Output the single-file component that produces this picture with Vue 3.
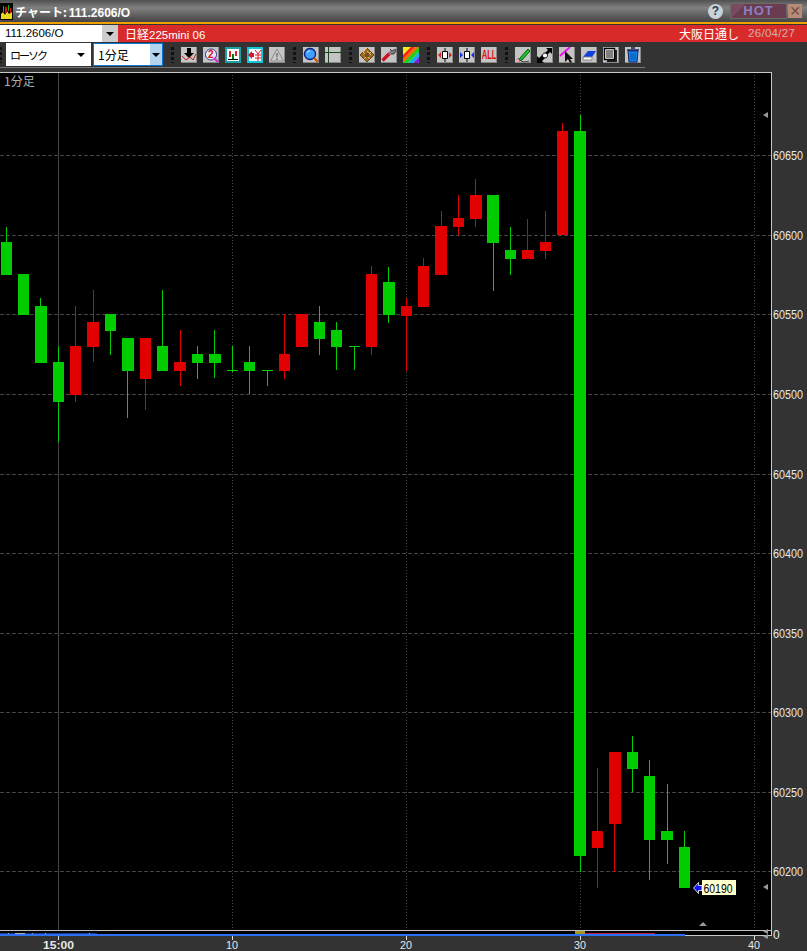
<script setup>
const G = '#00cc00'
const R = '#e00000'

// left, right, body top, body bottom, wick x, wick top, wick bottom, colour
const candles = [
  [1, 12, 242, 275, 6, 227, 242, G],
  [18, 29, 274, 315, 23, 274, 315, G],
  [35, 47, 306, 363, 40, 298, 363, G],
  [53, 64, 362, 402, 58, 346, 442, G],
  [70, 81, 346, 395, 75, 306, 402, R],
  [87, 99, 322, 347, 93, 290, 362, R],
  [105, 116, 314, 331, 110, 314, 355, G],
  [122, 134, 338, 371, 127, 338, 418, G],
  [140, 151, 338, 379, 145, 338, 410, R],
  [157, 168, 346, 371, 162, 290, 371, G],
  [174, 186, 362, 371, 180, 330, 386, R],
  [192, 203, 354, 363, 197, 346, 379, G],
  [209, 221, 354, 363, 214, 330, 378, G],
  [227, 238, 370, 371, 232, 346, 372, G],
  [244, 255, 362, 371, 249, 346, 394, G],
  [262, 273, 370, 371, 267, 370, 386, G],
  [279, 290, 354, 371, 284, 314, 379, R],
  [296, 308, 314, 347, 301, 314, 347, R],
  [314, 325, 322, 339, 319, 306, 355, G],
  [331, 342, 330, 347, 336, 322, 370, G],
  [349, 360, 346, 347, 354, 346, 370, G],
  [366, 377, 274, 347, 371, 266, 355, R],
  [383, 395, 282, 315, 388, 267, 323, G],
  [401, 412, 306, 316, 406, 298, 371, R],
  [418, 429, 266, 307, 423, 258, 307, R],
  [435, 447, 226, 275, 441, 211, 275, R],
  [453, 464, 218, 227, 458, 195, 235, R],
  [470, 482, 195, 219, 475, 179, 227, R],
  [487, 499, 195, 243, 493, 195, 291, G],
  [505, 516, 250, 259, 510, 227, 275, G],
  [522, 534, 250, 259, 527, 219, 259, R],
  [540, 551, 242, 251, 545, 211, 259, R],
  [557, 568, 131, 235, 562, 123, 235, R],
  [574, 586, 131, 856, 580, 115, 872, G],
  [592, 603, 831, 848, 597, 768, 888, R],
  [609, 621, 752, 824, 614, 752, 872, R],
  [627, 638, 752, 769, 632, 736, 792, G],
  [644, 655, 776, 840, 649, 760, 880, G],
  [661, 673, 831, 840, 667, 784, 864, G],
  [679, 690, 847, 888, 684, 831, 888, G],
]

const prices = [
  [60650, 155], [60600, 235], [60550, 314], [60500, 394], [60450, 474],
  [60400, 553], [60350, 633], [60300, 712], [60250, 792], [60200, 871],
]
const times = [[232, '10'], [406, '20'], [580, '30'], [754, '40']]

const groups = [
  [
    [
      { d: 'M6 1h4v5h3l-5 5-5-5h3z', fill: '#000' },
      { d: 'M1 9l4 4 4-3 3 3 3-6', stroke: '#c02020' },
    ],
    [
      { d: 'M8 2a5.500 5.500 0 1 0 .01 0z', fill: '#e8e8f8', stroke: '#3030a0' },
      { d: 'M11 11l4 4', stroke: '#e020e0', w: 2 },
      { t: '2', x: 5, y: 11, fill: '#e01010', s: 10 },
    ],
    [
      { d: 'M0 0h16v16H0z', fill: '#20a0a0' },
      { d: 'M2 2h12v12H2z', fill: '#fff' },
      { d: 'M4 4h2v6H4zM10 4h2v5h-2z', fill: '#e02020' },
      { d: 'M7 7h2v5H7z', fill: '#008000' },
      { d: 'M3 12h10v1H3z', fill: '#000' },
    ],
    [
      { d: 'M0 0h16v16H0z', fill: '#10c8d8' },
      { d: 'M2 2h12v12H2z', fill: '#fff' },
      { d: 'M1 8l4-4v2h2v4H5v2z', fill: '#e01030' },
      { d: 'M8 3l3 4 3-4M8 8h6M8 11h6M11 7v7', stroke: '#e01030' },
    ],
    [
      { d: 'M8 2l6.500 12h-13z', fill: '#c8c8c8', stroke: '#8c8c8c' },
      { d: 'M7 6h2v4H7zM7 11h2v2H7z', fill: '#8a8a8a' },
    ],
  ],
  [
    [
      { d: 'M7 1.500a5.500 5.500 0 1 0 .01 0z', fill: '#40a0ff', stroke: '#102080', w: 1.4 },
      { d: 'M4 6a3 3 0 0 1 3-2', stroke: '#d0f0ff' },
      { d: 'M11 11l4 4', stroke: '#c05810', w: 2.4 },
    ],
    [
      { d: 'M0 5.500h16M3.500 0v16', stroke: '#1a4a1a', w: 1 },
    ],
  ],
  [
    [
      { d: 'M8 1l7 7-7 7-7-7z', fill: '#a06820', stroke: '#604010' },
      { d: 'M4 5l7 7M8 1l-4 4M12 5l-7 7M8 4l4 4', stroke: '#e0c060' },
      { d: 'M6 6h4v4H6z', fill: '#705020' },
    ],
    [
      { d: 'M1.500 13.500l7-7', stroke: '#d01020', w: 3.4 },
      { d: 'M8 7l3-3', stroke: '#808080', w: 2.6 },
      { d: 'M9 2l2 2 2-1 1-1 1 2-2 3-3 0', fill: '#808080', stroke: '#404040' },
    ],
    [
      { d: 'M0 0h16v16H0z', fill: '#f0f020' },
      { d: 'M0 12L12 0h4v1L1 16H0z', fill: '#f07000' },
      { d: 'M0 8L8 0h4L0 12z', fill: '#ff2020' },
      { d: 'M0 16L16 0v5L5 16z', fill: '#20d020' },
      { d: 'M5 16L16 5v5l-6 6z', fill: '#10b0f0' },
      { d: 'M10 16l6-6v6z', fill: '#8020e0' },
    ],
  ],
  [
    [
      { d: 'M8 1v14', stroke: '#000' },
      { d: 'M5.500 4.500h5v7h-5z', fill: '#fff', stroke: '#000' },
      { d: 'M4 5v6L1 8zM12 5v6l3-3z', fill: '#e02020' },
    ],
    [
      { d: 'M8 1v14', stroke: '#000' },
      { d: 'M5.500 4.500h5v7h-5z', fill: '#fff', stroke: '#000' },
      { d: 'M1 5v6l3-3zM15 5v6l-3-3z', fill: '#1830e0' },
    ],
    [
      { t: 'ALL', x: 1, y: 12.500, fill: '#e01010', s: 12, tf: 'scale(0.64 1)' },
    ],
  ],
  [
    [
      { d: 'M5 11l8-9 2 2-8 9-3 1z', fill: '#20c030', stroke: '#006000' },
      { d: 'M1 13q2-3 4 0t9 1', stroke: '#404040' },
      { d: 'M2 11l3 3-2 1-2-2z', fill: '#f0a0c0' },
    ],
    [
      { d: 'M0 16V9l2 2 3-3 3 3-3 3 2 2z', fill: '#000' },
      { d: 'M9 1h6v6l-2-2-3 3-2-2 3-3z', fill: '#000' },
      { d: 'M8 6a2.500 2.500 0 1 0 .01 0z', fill: '#fff', stroke: '#000' },
    ],
    [
      { d: 'M1 9L11 0', stroke: '#f010f0', w: 2 },
      { d: 'M6 4v11l3-3 2 4 2-1-2-3h3z', fill: '#101010' },
    ],
    [
      { d: 'M2 10l5-6h8l-4 6z', fill: '#1040e0' },
      { d: 'M2 10h9v3H2z', fill: '#fff', stroke: '#808080' },
    ],
    [
      { d: 'M4 3h10v12H4z', fill: '#202020' },
      { d: 'M1.500 1.500h10v11h-10z', fill: '#fff', stroke: '#000', w: 1.4 },
      { d: 'M3 4h7M3 6h7M3 8h7M3 10h7', stroke: '#000' },
    ],
    [
      { d: 'M3 4h10l-1 11H4z', fill: '#1088f0', stroke: '#102060' },
      { d: 'M2 3h12M6 1h4', stroke: '#102060', w: 1.6 },
      { d: 'M6 6v7M8 6v7M10 6v7', stroke: '#0850a0' },
    ],
  ],
]
</script>

<template>
  <div class="window">
    <header class="title">
      <svg class="app-icon" width="13" height="17" viewBox="0 0 13 17">
        <path d="M0 0h13v17H0z" fill="#000" />
        <path d="M1 16v-5l2-2 2 3 2-4 2 3 3-2v7z" fill="#e8d820" />
        <path d="M3 3h1v6H3zM8 2h1v6H8z" fill="#00c000" />
        <path d="M5 4h2v6H5zM10 5h1v5h-1z" fill="#e01010" />
      </svg>
      <span class="title-text">チャート:<span class="title-code">111.2606/O</span></span>
      <span class="help">?</span>
      <span class="hot">HOT</span>
      <span class="close">✕</span>
    </header>

    <div class="symbol-bar">
      <div class="symbol-input">111.2606/O</div>
      <div class="symbol-drop"><i class="caret"></i></div>
      <div class="symbol-name">日経<span class="symbol-code">225mini 06</span></div>
      <div class="session">大阪日通し</div>
      <div class="date">26/04/27</div>
    </div>

    <div class="toolbar">
      <span class="grip first"></span>
      <div class="select"><span class="select-kind">ローソク</span><i class="caret"></i></div>
      <div class="select active"><span>1分足</span><b><i class="caret"></i></b></div>
      <template v-for="(group, g) in groups" :key="g">
        <span class="grip"></span>
        <div class="tool-group">
          <svg v-for="(icon, n) in group" :key="n" class="tool" width="16" height="16" viewBox="0 0 16 16">
            <template v-for="(s, k) in icon" :key="k">
              <text
                v-if="s.t"
                :x="s.x"
                :y="s.y"
                :fill="s.fill"
                :font-size="s.s"
                :transform="s.tf"
                class="tool-text"
              >{{ s.t }}</text>
              <path v-else :d="s.d" :fill="s.fill || 'none'" :stroke="s.stroke" :stroke-width="s.w || 1" />
            </template>
          </svg>
        </div>
      </template>
    </div>

    <svg class="chart" width="807" height="883" viewBox="0 68 807 883">
      <rect x="0" y="72" width="771" height="863" fill="#000" />

      <g shape-rendering="crispEdges">
        <line v-for="p in prices" :key="p[0]" x1="0" x2="771" :y1="p[1] + 0.5" :y2="p[1] + 0.5" stroke="#444" stroke-dasharray="4 2" />
        <line x1="58.5" x2="58.5" y1="72" y2="930" stroke="#444" />
        <line v-for="t in times" :key="t[0]" :x1="t[0] + 0.5" :x2="t[0] + 0.5" y1="72" y2="930" stroke="#444" stroke-dasharray="1 2" />

        <template v-for="(c, i) in candles" :key="i">
          <rect :x="c[4]" :y="c[5]" width="1" :height="c[6] - c[5]" :fill="c[7]" />
          <rect :x="c[0]" :y="c[2]" :width="c[1] - c[0]" :height="c[3] - c[2]" :fill="c[7]" />
        </template>

        <!-- volume strip -->
        <rect x="0" y="930" width="771" height="1" fill="#c0c0c0" />
        <rect x="685" y="935" width="86" height="1" fill="#c8c8c8" />
        <rect x="0" y="934" width="685" height="2" fill="#2a70f0" />
        <rect x="0" y="933" width="97" height="1" fill="#123a90" />
        <rect x="8" y="933" width="1" height="1" fill="#b0a080" />
        <rect x="15" y="933" width="10" height="1" fill="#b0b0b0" />
        <rect x="32" y="933" width="1" height="1" fill="#b0a080" />
        <rect x="45" y="933" width="1" height="1" fill="#b0b0b0" />
        <rect x="89" y="933" width="1" height="1" fill="#b0b0b0" />
        <rect x="575" y="931" width="10" height="3" fill="#a09820" />
        <rect x="585" y="933" width="70" height="1" fill="#c02040" />

        <rect x="771" y="72" width="1" height="864" fill="#c8c8c8" />
        <rect x="0" y="72" width="772" height="1" fill="#c8c8c8" />

        <!-- time ticks -->
        <rect x="58" y="936" width="1" height="4" fill="#ddd" />
        <rect v-for="t in times" :key="t[0]" :x="t[0]" y="936" width="1" height="4" fill="#ddd" />
      </g>

      <text x="4" y="86" class="scale-label">1分足</text>

      <text v-for="p in prices" :key="p[0]" x="773" :y="p[1] + 4.5" class="price" textLength="30" lengthAdjust="spacingAndGlyphs">{{ p[0] }}</text>
      <text x="773" y="939" class="price">0</text>

      <text x="43" y="948.500" class="time strong" textLength="31" lengthAdjust="spacingAndGlyphs">15:00</text>
      <text v-for="t in times" :key="t[0]" :x="t[0] - 6" y="948.500" class="time" textLength="12" lengthAdjust="spacingAndGlyphs">{{ t[1] }}</text>

      <!-- markers -->
      <path d="M768 112v6l-5-3z" fill="#999" />
      <path d="M768 884v6l-5-3z" fill="#999" />
      <path d="M699 926h8l-4-4z" fill="#999" />
      <path d="M768 929v5l-5-2.5zM768 934v5l-5-2.5z" fill="#999" />

      <!-- last price -->
      <rect x="702" y="880" width="34" height="15" fill="#ffffcc" />
      <path d="M693.500 888L698.500 882.500V885.500H702V890.500H698.500V893.500Z" fill="#1414ff" stroke="#fff" stroke-width="0.8" />
      <text x="703.500" y="892.500" class="last" textLength="29" lengthAdjust="spacingAndGlyphs">60190</text>
    </svg>
  </div>
</template>

<style>
body {
  margin: 0;
  background: #333;
}
</style>

<style scoped>
.window {
  width: 807px;
  height: 951px;
  overflow: hidden;
  background: #333;
  font-family: "Liberation Sans", "Noto Sans CJK JP", sans-serif;
}

.title {
  display: flex;
  align-items: center;
  height: 22px;
  background: linear-gradient(#505050, #808080 35%, #444);
  border-bottom: 2px solid #f0a000;
}
.app-icon {
  flex-shrink: 0;
}
.title-text {
  margin-left: 2px;
  color: #fff;
  font: bold 12px "Noto Sans CJK JP", "Liberation Sans", sans-serif;
}
.title-code {
  margin-left: 2px;
  font: bold 12px "Liberation Sans", sans-serif;
}
.help {
  width: 15px;
  height: 15px;
  margin-left: auto;
  border-radius: 50%;
  background: #c8d0d8;
  color: #2a3a50;
  font: bold 12px/15px "Liberation Sans", sans-serif;
  text-align: center;
}
.hot {
  width: 55px;
  height: 14px;
  margin-left: 7px;
  border: 1px solid #6a6a6a;
  background: linear-gradient(135deg, #7a4a60 10px, #6a3c50 10px);
  color: #8a80c0;
  font: bold 13px/14px "Liberation Sans", sans-serif;
  letter-spacing: 1px;
  text-align: center;
}
.close {
  width: 14px;
  height: 14px;
  margin: 0 5px 0 1px;
  background: #b88a78;
  color: #705040;
  font: bold 14px/14px "DejaVu Sans", sans-serif;
  text-align: center;
}

.symbol-bar {
  display: flex;
  align-items: stretch;
  height: 17px;
  margin-top: 1px;
  background: #d92a2a;
  color: #fff;
  font-size: 12px;
  line-height: 17px;
}
.symbol-input {
  width: 97px;
  padding-left: 5px;
  background: #fff;
  color: #000;
  font-size: 11.500px;
}
.symbol-drop {
  display: flex;
  align-items: center;
  justify-content: center;
  width: 16px;
  background: #ccc;
}
.symbol-name {
  margin-left: 7px;
  font-family: "Noto Sans CJK JP", sans-serif;
}
.symbol-code {
  font: 11.500px "Liberation Sans", sans-serif;
}
.session {
  margin-left: auto;
  font-family: "Noto Sans CJK JP", sans-serif;
}
.date {
  width: 48px;
  margin: 0 11px 0 9px;
  color: #d0b0b0;
  font-size: 11.500px;
  letter-spacing: 0.3px;
}

.toolbar {
  display: flex;
  align-items: center;
  width: 645px;
  height: 26px;
  box-sizing: border-box;
  border-bottom: 1px solid #777;
}
.grip {
  width: 3px;
  height: 16px;
  margin: 0 7px 0 8px;
  background: repeating-linear-gradient(#111 0 3px, transparent 3px 5px);
}
.grip.first {
  width: 2px;
  margin: 0 4px 0 0;
}
.select {
  display: flex;
  align-items: center;
  justify-content: space-between;
  width: 85px;
  height: 23px;
  box-sizing: border-box;
  padding: 0 6px 0 4px;
  background: #fff;
  color: #000;
  font: 12px "Noto Sans CJK JP", sans-serif;
}
.select-kind {
  font-size: 11px;
  letter-spacing: -2px;
}
.select.active {
  width: 70px;
  margin-left: 2px;
  padding: 0 0 0 4px;
  border: 1px solid #0a78d8;
}
.select b {
  display: flex;
  align-items: center;
  justify-content: center;
  width: 12px;
  height: 100%;
  background: #b4d4ee;
}
.caret {
  width: 0;
  height: 0;
  border: 4px solid transparent;
  border-top-color: #000;
  border-bottom-width: 0;
}

.tool-group {
  display: flex;
  gap: 6px;
}
.tool {
  display: block;
  background: #c4c4c4;
  box-shadow: inset -1px -1px 0 #8a8a8a;
}
.tool-text {
  font-family: "Liberation Sans", sans-serif;
  font-weight: bold;
}

.chart {
  display: block;
}
.scale-label {
  fill: #b0b0b0;
  font: 12px "Noto Sans CJK JP", sans-serif;
}
.price {
  fill: #e8e8e8;
  font: 12px "Liberation Sans", sans-serif;
}
.time {
  fill: #e8e8e8;
  font: 11px "Liberation Sans", sans-serif;
}
.time.strong {
  font-weight: bold;
}
.last {
  fill: #000;
  font: 13px "Liberation Sans", sans-serif;
}
</style>
